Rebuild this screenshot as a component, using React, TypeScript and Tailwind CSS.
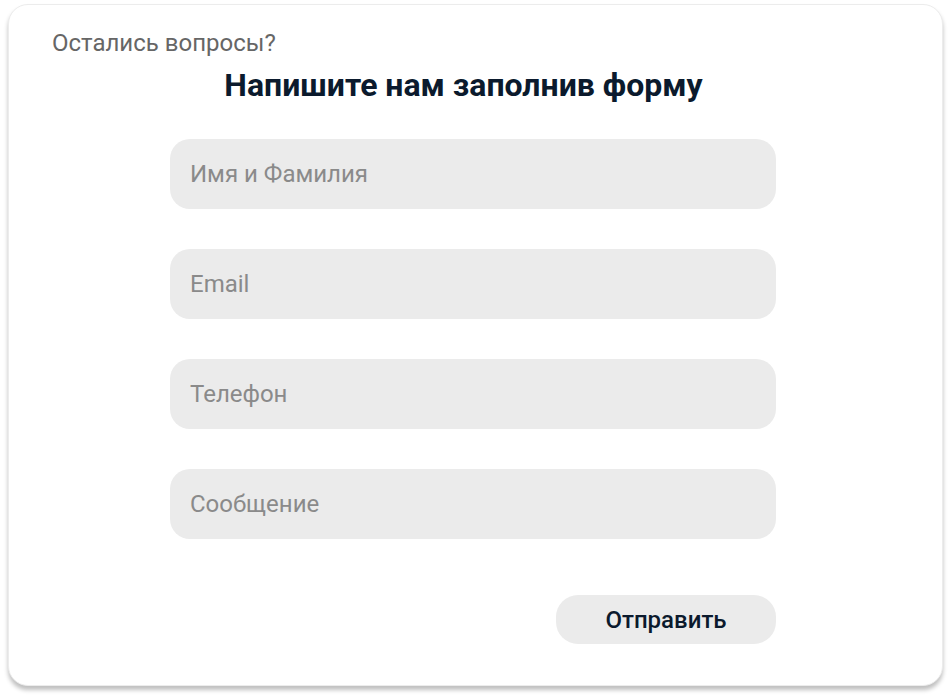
export default function App() {
  const fields = ['Имя и Фамилия', 'Email', 'Телефон', 'Сообщение'];

  return (
    <div className="w-[951px] h-[696px] bg-white pt-[4px] pl-[8px]" style={{ fontFamily: 'Roboto, "Noto Sans", sans-serif' }}>
      <div className="w-[935px] h-[682px] rounded-[20px] bg-white shadow-[0_4px_4px_rgba(0,0,0,0.25)] border border-[#ececec] flex flex-col">
        <p className="mt-[24px] ml-[43px] text-[24px] leading-[28px] text-[#666666]">Остались вопросы?</p>
        <h1 className="mt-[9px] text-center text-[32px] leading-[38px] font-bold text-[#0b1a2d] pr-[24px]">
          Напишите нам заполнив форму
        </h1>
        <form className="mt-[35px] ml-[161px] w-[606px] flex flex-col gap-[40px]">
          {fields.map((f) => (
            <input
              key={f}
              placeholder={f}
              className="h-[70px] w-full rounded-[20px] bg-[#ebebeb] px-[20px] text-[24px] text-[#333] placeholder:text-[#8a8a8a] outline-none"
            />
          ))}
        </form>
        <div className="mt-[56px] ml-[547px] w-[220px]">
          <button
            type="button"
            className="h-[49px] w-full rounded-[22px] bg-[#ebebeb] text-[24px] font-medium text-[#0b1a2d]"
          >
            Отправить
          </button>
        </div>
      </div>
    </div>
  );
}
